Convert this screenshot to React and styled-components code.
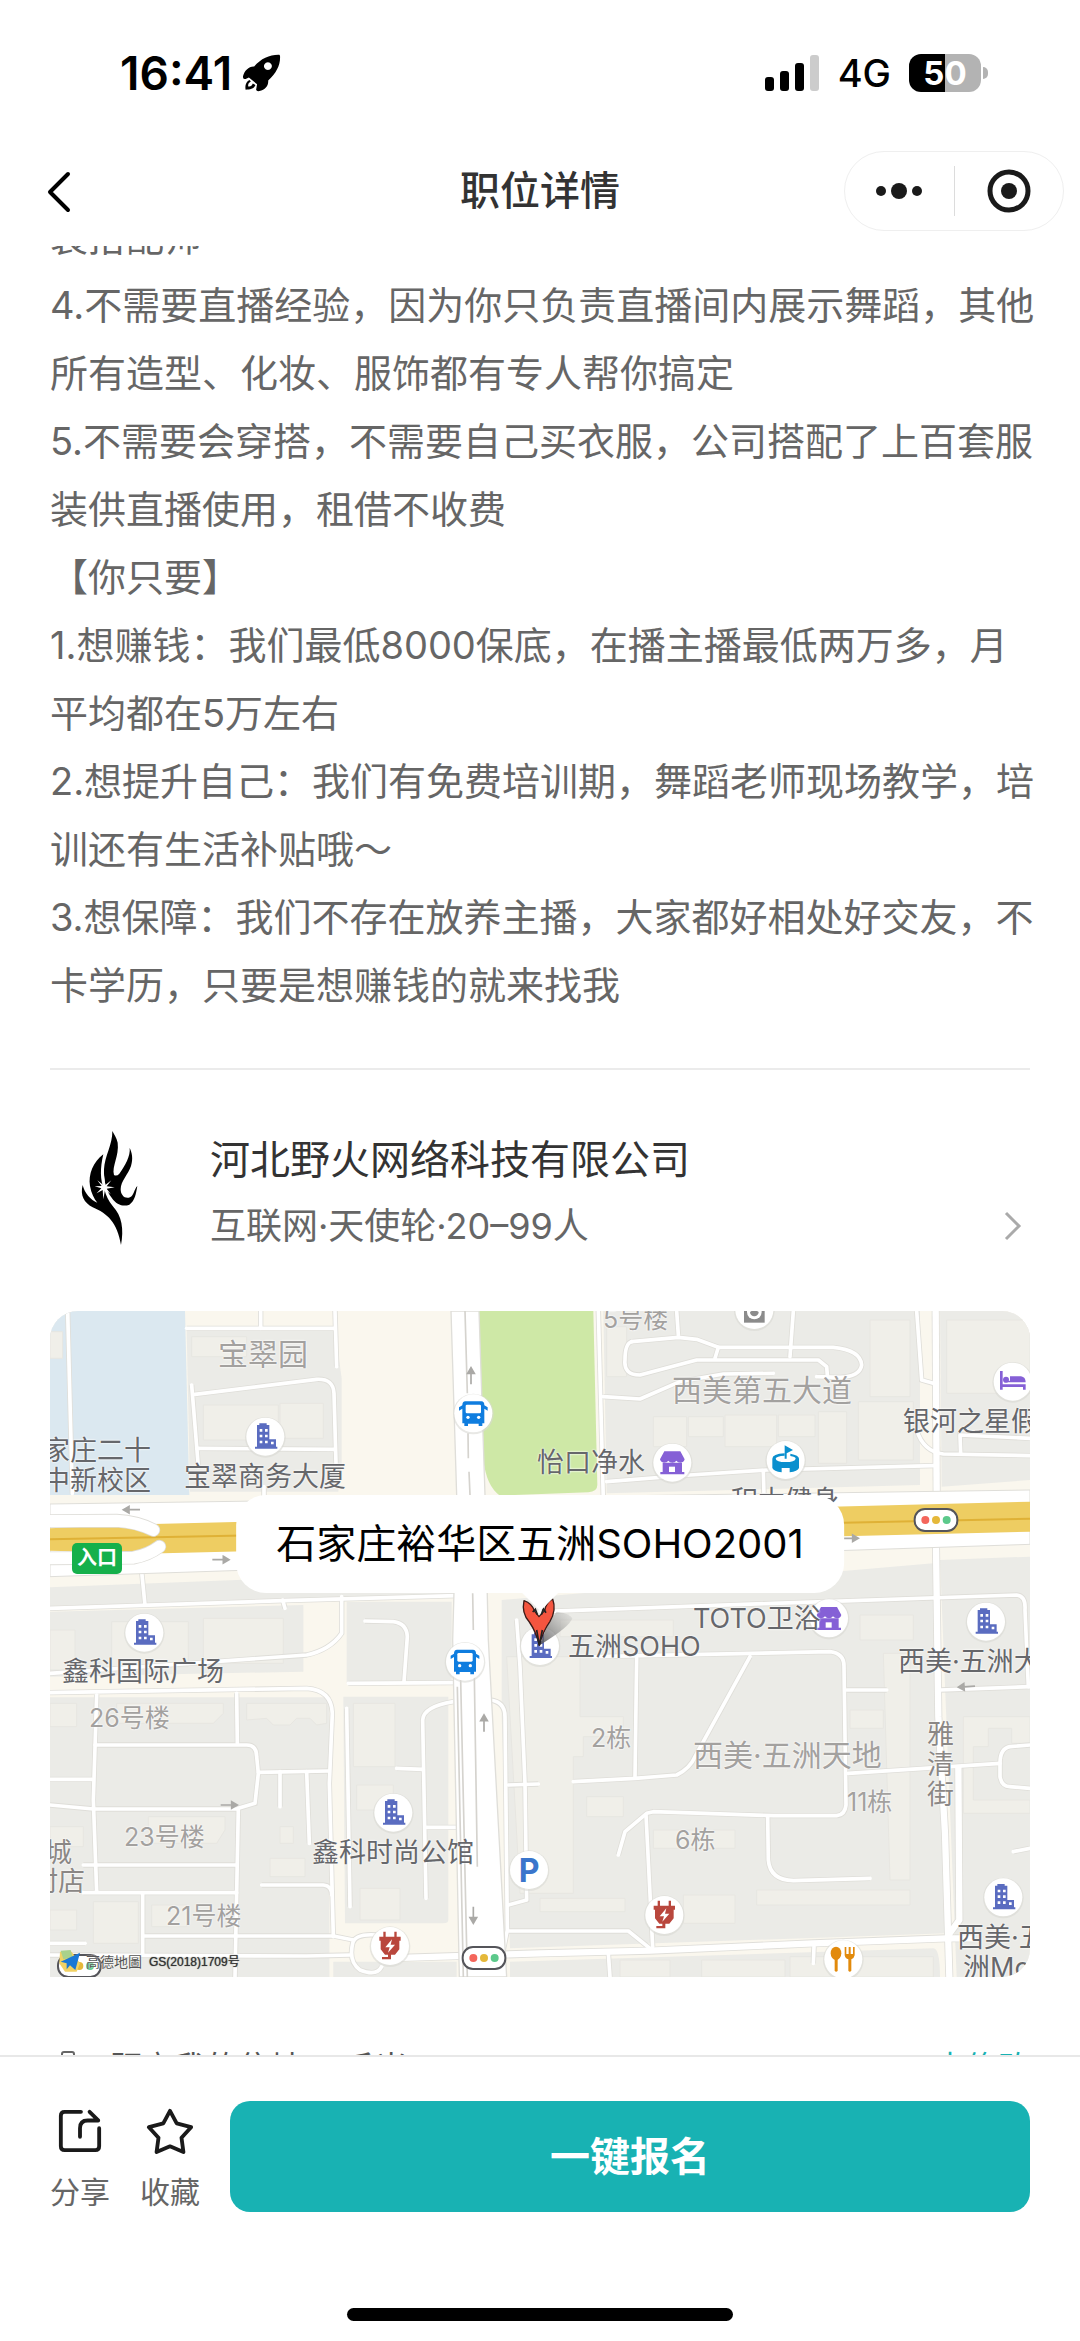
import React, { useLayoutEffect, useRef } from 'react'
import styled, { createGlobalStyle } from 'styled-components'

const GlobalStyle = createGlobalStyle`
  * {
    box-sizing: border-box;
  }
  body {
    margin: 0;
    background: #fff;
    font-family: Inter, 'Noto Sans CJK SC', sans-serif;
    color: #333;
  }
  button {
    padding: 0;
    border: none;
    background: none;
    font: inherit;
    color: inherit;
    cursor: pointer;
  }
  svg {
    display: block;
  }
`

const Page = styled.div`
  display: flex;
  flex-direction: column;
  height: 100vh;
`

const StatusBar = styled.div`
  display: flex;
  flex: none;
  justify-content: space-between;
  align-items: center;
  height: 136px;
  padding: 10px 92px 0 120px;
  color: #000;
`

const StatusGroup = styled.div`
  display: flex;
  align-items: center;
  gap: ${props => props.$gap}px;
`

const Time = styled.span`
  font-size: 46px;
  font-weight: 600;
`

const Network = styled.span`
  font-size: 38px;
  font-weight: 500;
`

const Battery = styled.div`
  display: flex;
  align-items: center;
  gap: 2px;

  .level {
    width: 72px;
    height: 38px;
    border-radius: 12px;
    background: linear-gradient(to right, #000 50%, #b3b3b3 50%);
    color: #fff;
    font-size: 33px;
    font-weight: 700;
    line-height: 38px;
    text-align: center;
  }
  .tip {
    width: 5px;
    height: 12px;
    border-radius: 0 6px 6px 0;
    background: #b3b3b3;
  }
`

const NavBar = styled.header`
  display: grid;
  flex: none;
  grid-template-columns: 1fr auto 1fr;
  align-items: center;
  height: 110px;
  padding: 0 16px;

  h1 {
    margin: 0;
    font-size: 40px;
    font-weight: 500;
    line-height: 56px;
  }
`

const BackButton = styled.button`
  justify-self: start;
  padding-left: 28px;
`

const Capsule = styled.div`
  display: flex;
  justify-self: end;
  align-items: center;
  width: 220px;
  height: 80px;
  border: 1px solid #efefef;
  border-radius: 40px;

  button {
    display: flex;
    flex: 1;
    justify-content: center;
  }
  button + button {
    height: 50px;
    align-items: center;
    border-left: 1px solid #dcdcdc;
  }
`

const Scroller = styled.main`
  flex: 1;
  min-height: 0;
  overflow-y: auto;
  padding: 0 50px 40px;
  scrollbar-width: none;
`

const Description = styled.p`
  margin: 0 -20px 49px 0;
  color: #666;
  font-size: 38px;
  line-height: 68px;
  white-space: pre-line;
`

const Company = styled.a`
  display: flex;
  align-items: flex-start;
  gap: 50px;
  padding: 58px 0 51px;
  border-top: 2px solid #ebebeb;
  color: inherit;
  text-decoration: none;

  h2 {
    margin: 0;
    font-size: 40px;
    font-weight: 400;
    line-height: 64px;
  }
`

const CompanyInfo = styled.div`
  flex: 1;
`

const CompanyMeta = styled.div`
  display: flex;
  justify-content: space-between;
  align-items: center;
  padding-right: 8px;
  color: #666;
  font-size: 36px;
  line-height: 68px;
`

const Map = styled.div`
  position: relative;
  height: 666px;
  overflow: hidden;
  border-radius: 28px 28px 28px 0;
  background: #ebebe7;
`

const labelTones = {
  poi: '#66676b',
  area: '#a3a19f',
  street: '#8b8785',
}

const Label = styled.span`
  position: absolute;
  left: ${props => props.$x}px;
  top: ${props => props.$y - 15}px;
  color: ${props => labelTones[props.$tone]};
  font-size: ${props => props.$size}px;
  line-height: 30px;
  text-shadow: 0 0 2px #fff, 0 0 2px #fff;
  white-space: pre;
`

const Entrance = styled.span`
  position: absolute;
  left: 22px;
  top: 232px;
  width: 50px;
  height: 31px;
  border-radius: 5px;
  background: #16b04b;
  color: #fff;
  font-size: 20px;
  font-weight: 700;
  line-height: 31px;
  text-align: center;
`

const Copyright = styled.span`
  position: absolute;
  left: 36px;
  bottom: 5px;
  display: flex;
  gap: 7px;
  color: #333;
  font-family: 'Liberation Sans', 'Noto Sans CJK SC', sans-serif;
  font-size: 12px;
  line-height: 20px;
  text-shadow: 0 0 1px #444;

  span {
    color: #555;
    font-size: 14px;
    text-shadow: 0 0 2px #fff;
  }
`

const Bubble = styled.div`
  position: absolute;
  top: 184px;
  left: 50%;
  padding: 0 40px;
  border-radius: 30px;
  background: #fff;
  color: #000;
  font-size: 40px;
  line-height: 98px;
  white-space: nowrap;
  transform: translateX(-50%);

  &::after {
    content: '';
    position: absolute;
    top: 100%;
    left: 50%;
    margin-left: -18px;
    border: 18px solid transparent;
    border-top-color: #fff;
    border-bottom: none;
  }
`

const Distance = styled.div`
  display: flex;
  align-items: center;
  margin-top: 67px;
  color: #555;
  font-size: 32px;
  line-height: 48px;

  svg {
    margin-right: 24px;
  }
  button {
    margin-left: auto;
    color: #18b2b3;
  }
`

const BottomBar = styled.footer`
  flex: none;
  padding-bottom: 20px;
  border-top: 2px solid #e8e8e8;
  background: #fff;
`

const Actions = styled.div`
  display: flex;
  align-items: center;
  gap: 30px;
  padding: 44px 50px 96px;
`

const IconButton = styled.button`
  display: flex;
  flex-direction: column;
  align-items: center;
  gap: 18px;
  height: 111px;
  padding-top: 7px;
  color: #666;
  font-size: 30px;
  line-height: 40px;
`

const ApplyButton = styled.button`
  flex: 1;
  height: 111px;
  padding-bottom: 6px;
  border-radius: 20px;
  background: #18b2b3;
  color: #fff;
  font-size: 40px;
  font-weight: 700;
`

const HomeIndicator = styled.div`
  width: 386px;
  height: 13px;
  margin: 0 auto;
  border-radius: 7px;
  background: #000;
`

const description = `装搭配师
4.不需要直播经验，因为你只负责直播间内展示舞蹈，其他
所有造型、化妆、服饰都有专人帮你搞定
5.不需要会穿搭，不需要自己买衣服，公司搭配了上百套服
装供直播使用，租借不收费
【你只要】
1.想赚钱：我们最低8000保底，在播主播最低两万多，月
平均都在5万左右
2.想提升自己：我们有免费培训期，舞蹈老师现场教学，培
训还有生活补贴哦～
3.想保障：我们不存在放养主播，大家都好相处好交友，不
卡学历，只要是想赚钱的就来找我`

const labels = [
  { x: 168, y: 43, size: 30, tone: 'area', text: '宝翠园' },
  { x: -7, y: 140, size: 27, tone: 'poi', text: '家庄二十\n中新校区' },
  { x: 134, y: 166, size: 27, tone: 'poi', text: '宝翠商务大厦' },
  { x: 487, y: 152, size: 27, tone: 'poi', text: '怡口净水' },
  { x: 553, y: 8, size: 25, tone: 'area', text: '5号楼' },
  { x: 622, y: 79, size: 30, tone: 'area', text: '西美第五大道' },
  { x: 853, y: 111, size: 27, tone: 'poi', text: '银河之星假' },
  { x: 681, y: 190, size: 27, tone: 'poi', text: '积木健身' },
  { x: 643, y: 308, size: 27, tone: 'poi', text: 'TOTO卫浴' },
  { x: 518, y: 336, size: 27, tone: 'poi', text: '五洲SOHO' },
  { x: 12, y: 361, size: 27, tone: 'poi', text: '鑫科国际广场' },
  { x: 39, y: 407, size: 25, tone: 'area', text: '26号楼' },
  { x: 74, y: 526, size: 25, tone: 'area', text: '23号楼' },
  { x: 116, y: 605, size: 25, tone: 'area', text: '21号楼' },
  { x: -5, y: 542, size: 27, tone: 'street', text: '城' },
  { x: -19, y: 571, size: 27, tone: 'street', text: '村店' },
  { x: 262, y: 542, size: 27, tone: 'poi', text: '鑫科时尚公馆' },
  { x: 541, y: 427, size: 25, tone: 'area', text: '2栋' },
  { x: 643, y: 444, size: 30, tone: 'area', text: '西美·五洲天地' },
  { x: 797, y: 491, size: 25, tone: 'area', text: '11栋' },
  { x: 625, y: 529, size: 25, tone: 'area', text: '6栋' },
  { x: 877, y: 424, size: 27, tone: 'street', text: '雅\n清\n街' },
  { x: 848, y: 351, size: 27, tone: 'poi', text: '西美·五洲大' },
  { x: 907, y: 627, size: 27, tone: 'poi', text: '西美·五' },
  { x: 913, y: 657, size: 27, tone: 'poi', text: '洲Mo' },
]

// map drawing units are a third of a pixel
const blocks = [
  'M440 90H885L905 235V490L895 575H450Z',
  'M1690 33H2640V555L1700 580Z',
  'M2700 33H2970V540L2705 560Z',
  'M30 862L1240 815V885L30 918Z',
  'M30 935L790 915V1115L30 1130Z',
  'M920 905H1235V1150H920Z',
  'M30 1192H850Q868 1195 868 1240V2031H30Z',
  'M910 1190H1225V1860Q1225 1870 1210 1870H915Z',
  'M880 1985H1250V2031H880Z',
  'M1385 900L2680 790L2720 1900L1410 1945L1385 1250Z',
  'M2700 780L2970 770V2031H2750Z',
  'M1410 1985L2680 1945Q2700 1945 2700 2031H1410Z',
]

const buildings = [
  'M30 95H68V175H30Z', 'M455 110H620V170H455Z', 'M490 315H715V420H490Z', 'M720 310H850V415H720Z',
  'M1700 80H1760V230H1700Z', 'M1840 350H1940V440H1840Z', 'M1945 350H2050V410H1945Z', 'M2055 345H2210V440H2055Z',
  'M2215 345H2325V410H2215Z', 'M2335 335H2420V490H2335Z', 'M2455 305H2620V480H2455Z', 'M2490 60H2610V290H2490Z',
  'M2720 60H2970V280H2720Z', 'M215 965H445V1100H215Z', 'M490 955H730V1090H490Z', 'M30 990H105V1110H30Z',
  'M30 1210H110V1280H30Z', 'M230 1210H550V1240L520 1270H230Z', 'M620 1210H860V1270L830 1275L810 1255H770L750 1275H700L680 1255L620 1260Z',
  'M940 1210H1065V1400H940Z', 'M950 1455H1060V1530H950Z', 'M960 1765H1080V1860H960Z', 'M325 1550H555V1590L530 1630H325Z',
  'M30 1580H130V1640H30Z', 'M160 1805H295V1930H160Z', 'M30 1830H110V1890H30Z', 'M690 1675H795V1730H690Z',
  'M335 1815H440V1880H335Z', 'M720 1580H760V1630H720Z', 'M1400 1070H1620V1250H1750V1310H1630V1370H1600V1780H1440Z',
  'M1640 1490H1750V1550H1640Z', 'M1840 1590H2085V1645H1840Z', 'M2430 1230H2530V1285H2430Z', 'M2530 1060H2610V1740H2550Z',
  'M2150 1770H2610V1815H2150Z', 'M1930 1785H2085V1870H1930Z', 'M1500 1795H1755V1835H1500Z', 'M2250 1970H2680V2031H2250Z',
  'M1985 1980H2235V2031H1985Z', 'M1740 1980H1890V2031H1740Z', 'M2770 1250H2970V1330H2915V1285H2845V1340H2800V1500H2970V1540H2770Z',
  'M2620 945H2460V1020H2620Z', 'M1560 960H1900V1010H1560Z',
]

const roads = [
  'M83 33L97 580', 'M440 85H885', 'M662 33V85', 'M885 33L890 200',
  'M455 255L475 500', 'M465 283L830 238Q880 235 882 280L888 490', 'M470 445L885 448', 'M672 560V600',
  'M1675 33L1690 600', 'M1910 33L1915 105',
  'M1775 125L1915 112L1970 118L2035 142H2380Q2462 150 2465 195Q2460 230 2400 232L2330 230',
  'M1775 125Q1755 130 1755 180Q1750 225 1800 225L1970 180H2335L2360 200L2362 225', 'M2035 142L2025 175', 'M2260 33L2250 170',
  'M1690 290L1800 297L1920 245L2050 222L2200 220', 'M1700 545L1950 525L2180 510L2680 497', 'M2170 515L2172 585',
  'M2630 33L2645 240L2680 250', 'M2630 390Q2650 455 2710 462L2970 467', 'M2970 415L2760 405L2762 460',
  'M305 815L315 915', 'M30 925L730 902L1250 887', 'M728 900L735 925',
  'M30 1120L800 1065Q870 1050 905 1000V890', 'M30 1178L800 1165Q875 1170 877 1240L868 1450L880 1910',
  'M170 1185L160 1500L170 1775', 'M165 1335H620Q650 1335 650 1370L655 1420L645 1510L595 1525L585 2031', 'M590 1180L592 1330',
  'M30 1438H155', 'M30 1515L160 1527H595', 'M655 1417L865 1413', 'M720 1415V1520', 'M800 1415L808 1630',
  'M130 1695H590', 'M130 1778H590', 'M308 1780V1960', 'M665 1755H850Q875 1757 875 1785', 'M310 1908H880L940 1920',
  'M30 1965L800 1968L930 1965', 'M1010 1905Q945 1900 938 1930Q925 1985 960 2010Q1010 2030 1025 2000', 'M30 1930H135',
  'M920 1225L930 1820', 'M1240 1205Q1150 1220 1148 1260L1158 1795', 'M1160 1582H1280', 'M1070 1405L1150 1408',
  'M925 1150L1240 1148', 'M975 963L1060 965Q1100 970 1102 1010L1092 1145',
  'M1350 1200Q1395 1205 1395 1250L1402 1890L1380 2000', 'M1430 960L1440 1100L1455 1450L1460 1800L1405 1815', 'M1405 1455L1495 1452', 'M1405 1893H1765L1830 1945',
  'M1500 935L2200 910L2930 885Q2958 888 2955 930L2965 1160', 'M1600 1445L1785 1435L1910 1425Q1950 1405 1965 1370L2130 1070', 'M1790 1075L1785 1430',
  'M1660 1070L2370 1055Q2413 1060 2412 1100L2418 1515Q2415 1545 2390 1547L2200 1547L1840 1535L1820 1540L1755 1595L1735 1665',
  'M1818 1545L1838 1940', 'M2183 1550L2185 1680Q2190 1740 2260 1742L2490 1735', 'M2420 1170H2540', 'M2425 1420L2880 1390',
  'M2970 1335L2910 1340Q2880 1345 2880 1390V1430Q2885 1460 2910 1460L2970 1465', 'M2700 1170L2970 1160', 'M1705 1960L1710 2031', 'M2322 1940L2320 1990', 'M2920 1655L2970 1645',
]

const wideRoads = [
  'M2687 33L2690 580', 'M2688 740L2695 1250L2715 1600L2728 2031', 'M2755 1395L2758 1860L2722 1910',
  'M1040 1975L1500 1960L1830 1952L2320 1930L2720 1915H2800',
]

const arrows = [
  [1293, 228, -90], [275, 629, 180], [542, 779, 0], [567, 1515, 0], [1332, 1270, -90], [1300, 1845, 90], [2780, 1160, 176], [2430, 715, 0],
]

const BuildingIcon = () => (
  <g fill="#5a6cc0">
    <path d="M-25-35H-18V-40H4V-35H12V8H32V30H36V36H-31V30H-25Z" />
    <path d="M-17-23h8v8h-8ZM-1-23h8v8h-8ZM-17-6h8v8h-8ZM-1-6h8v8h-8ZM-17 12h8v8h-8ZM-1 12h8v8h-8ZM17 15h8v8h-8Z" fill="#fff" />
  </g>
)

const BusIcon = () => (
  <g fill="#0f7ddf">
    <path d="M-24-36H24Q33-35 33-25V-24L43-18V-8L33-14V30H27V38H16V31H-16V38H-27V30H-33V-14L-43-8V-18L-33-24V-25Q-33-35-24-36Z" />
    <rect x="-23" y="-26" width="46" height="26" rx="4" fill="#fff" />
    <circle cx="-16" cy="12" r="5" fill="#fff" />
    <circle cx="16" cy="12" r="5" fill="#fff" />
  </g>
)

const StoreIcon = () => (
  <g fill="#8560d6">
    <path d="M-24-34H24L37-10Q34 0 25 0Q16 0 12-6Q8 0 0 0Q-8 0-12-6Q-16 0-25 0Q-34 0-37-10Z" />
    <path d="M-29 0H29V28H36V35H-36V28H-29Z" />
    <rect x="-10" y="12" width="18" height="16" fill="#fff" />
  </g>
)

const StadiumIcon = () => (
  <g fill="#0a8fce">
    <path d="M-3-44L22-30L3-20V-4H-3Z" />
    <path d="M-3-20Q-40-18-40-4V24Q-36 34-12 37V24H12V37Q36 34 40 24V-4Q40-14 14-19V-12Q30-10 30-4Q28 6 0 6Q-28 6-30-4Q-28-12-3-13Z" />
  </g>
)

const BedIcon = () => (
  <g fill="#8560d6">
    <path d="M-38-32H-30V8H39V24H31V16H-30V24H-38Z" />
    <circle cx="-20" cy="-6" r="9" />
    <path d="M-8-16H25Q39-14 39 2H-26V-1L-8-3Z" />
  </g>
)

const WasherIcon = () => (
  <g>
    <rect x="-31" y="-40" width="62" height="78" fill="#8b8b8b" />
    <circle cy="6" r="22" fill="#fff" />
    <path d="M-13 6Q0-4 13 6A13 13 0 0 1-13 6Z" fill="#8b8b8b" />
  </g>
)

const PlugIcon = () => (
  <g fill="#b9473d">
    <path d="M-20-43H-13V-28H13V-43H20V-28H32V-16H28V10L15 26H3V40H-24V33H-6V26H-15L-28 10V-16H-32V-28H-20Z" />
    <path d="M6-20L-14 4H-1L-6 20L15-4H2Z" fill="#fff" />
  </g>
)

const FoodIcon = () => (
  <g fill="#e28a0c">
    <ellipse cx="-22" cy="-18" rx="16" ry="20" />
    <rect x="-26" y="-4" width="9" height="41" rx="4" />
    <path d="M4-37H9V-16H16V-37H22V-16H29V-37H34V-12Q32-2 24 0V34Q19 40 15 34V0Q6-2 4-12Z" />
  </g>
)

const ParkingIcon = () => (
  <text y="35" fill="#3a76cc" fontFamily="Inter, sans-serif" fontSize="96" fontWeight="700" textAnchor="middle">P</text>
)

const pois = [
  [676, 410, BuildingIcon], [313, 998, BuildingIcon], [2838, 965, BuildingIcon], [2890, 1792, BuildingIcon],
  [1060, 1538, BuildingIcon], [1500, 1038, BuildingIcon], [1300, 340, BusIcon], [1275, 1085, BusIcon],
  [1897, 488, StoreIcon], [2367, 955, StoreIcon], [2237, 480, StadiumIcon], [2143, 30, WasherIcon],
  [2918, 245, BedIcon], [1467, 1710, ParkingIcon], [1050, 1938, PlugIcon], [1873, 1845, PlugIcon], [2410, 1978, FoodIcon],
]

const TrafficLight = ({ x, y }) => (
  <g transform={`translate(${x} ${y})`}>
    <rect x="-64" y="-33" width="128" height="66" rx="31" fill="#fff" stroke="#55555a" strokeWidth="6" />
    <circle cx="-32" r="12" fill="#f4665c" />
    <circle r="12" fill="#e5b83a" />
    <circle cx="32" r="12" fill="#5cc98b" />
  </g>
)

const MapDrawing = () => (
  <svg width="980" height="666" viewBox="30 33 2940 1998">
    <rect x="30" y="33" width="2940" height="1998" fill="#faf7ee" />
    <path d="M30 33H435L448 585H30Z" fill="#dbe8f0" />
    {blocks.map(d => <path key={d} d={d} fill="#ebebe7" />)}
    {buildings.map(d => <path key={d} d={d} fill="#f0efe9" stroke="#e7e6e1" strokeWidth="3" />)}
    <path d="M1315 33H1660L1672 555Q1672 575 1645 577L1380 587Q1340 560 1330 480Z" fill="#cee8a6" />
    <g fill="none" stroke="#dfded9" strokeWidth="16">
      {roads.map(d => <path key={d} d={d} />)}
    </g>
    <g fill="none" stroke="#dfded9" strokeWidth="24">
      {wideRoads.map(d => <path key={d} d={d} />)}
    </g>
    <g fill="none" stroke="#fff" strokeWidth="11" strokeLinejoin="round" strokeLinecap="round">
      {roads.map(d => <path key={d} d={d} />)}
    </g>
    <g fill="none" stroke="#fff" strokeWidth="19" strokeLinejoin="round">
      {wideRoads.map(d => <path key={d} d={d} />)}
    </g>

    <path d="M30 612L2970 570V733L30 830Z" fill="#fff" stroke="#dfded9" strokeWidth="3" />
    <path d="M30 685L340 672L2970 605V695L370 760L30 752Z" fill="#eecd62" />
    <path d="M30 718L345 712L2970 656" fill="none" stroke="#dfb136" strokeWidth="6" />
    <g fill="none" strokeLinecap="round">
      <path d="M20 663L230 662Q290 665 340 690M20 775L280 773Q325 765 358 740" stroke="#dfded9" strokeWidth="41" />
      <path d="M20 663L230 662Q290 665 340 690M20 775L280 773Q325 765 358 740" stroke="#fff" strokeWidth="36" />
    </g>
    <path d="M1233 33H1317L1335 585L1345 1020L1400 2031H1258L1238 1020L1250 585Z" fill="#fff" stroke="#dfded9" strokeWidth="4" />
    <path d="M1275 33L1282 280M1284 400L1285 475M1287 515L1290 585M1298 880L1300 990M1252 1160L1270 2031M1262 1140L1282 2031M1303 1130L1312 1700" fill="none" stroke="#d5d3ce" strokeWidth="5" />

    {arrows.map(([x, y, turn]) => (
      <path key={x} d="M-25 0H20M8-10L25 0L8 10Z" transform={`translate(${x} ${y}) rotate(${turn})`} fill="#aaa9a6" stroke="#aaa9a6" strokeWidth="5" />
    ))}

    {pois.map(([x, y, Icon]) => (
      <g key={`${x}-${y}`} transform={`translate(${x} ${y})`}>
        <circle r="61" cy="2" fill="#d9d8d4" opacity="0.6" />
        <circle r="57" fill="#fff" />
        <Icon />
      </g>
    ))}
    <TrafficLight x={2688} y={660} />
    <TrafficLight x={1332} y={1974} />
    <TrafficLight x={118} y={1998} />

    <path d="M60 1955H95L120 1990L110 2015H75L58 1990Z" fill="#f2d264" />
    <path d="M62 1952L92 1950L98 1972L70 1978Z" fill="#a9d18b" />
    <path d="M62 1985L120 1958L106 2010L90 1996L80 2008V1990Z" fill="#1a78d6" />

    <defs>
      <linearGradient id="pin-shadow" x1="0" y1="1" x2="1" y2="0">
        <stop offset="0" stopColor="#555" stopOpacity="0.9" />
        <stop offset="1" stopColor="#999" stopOpacity="0.1" />
      </linearGradient>
    </defs>
    <path d="M1500 1035Q1520 970 1550 935Q1590 940 1597 955Q1590 980 1500 1035Z" fill="url(#pin-shadow)" />
    <path d="M1452 902Q1444 940 1468 966Q1488 995 1498 1036Q1508 995 1530 964Q1550 930 1538 897Q1518 908 1514 932L1497 950L1484 934Q1476 910 1452 902Z" fill="#f4553f" stroke="#3b1a17" strokeWidth="4" strokeLinejoin="round" />
    <path d="M1478 936L1486 928L1492 944M1504 944L1510 926L1518 938M1490 990L1498 1036L1507 990" fill="none" stroke="#222" strokeWidth="5" />
  </svg>
)

const JobDetail = () => {
  const scroller = useRef(null)

  // open part of the way down the description
  useLayoutEffect(() => {
    scroller.current.scrollTop = 43
  }, [])

  return (
    <Scroller ref={scroller}>
      <Description>{description}</Description>

      <Company href="#company">
        <svg width="110" height="120" viewBox="-30 66 330 360">
          <path d="M130 145C100 168 84 205 90 240C94 262 102 278 112 290C92 282 74 262 68 237C60 268 72 290 98 304C142 322 172 350 183 417C192 370 186 330 158 300C146 286 138 270 133 250C120 225 120 185 130 145Z" />
          <path d="M157 75C158 115 134 150 132 190C131 225 138 255 155 275C170 297 190 303 208 296C225 285 228 262 232 240C222 250 222 268 210 274C195 280 182 268 182 250C182 225 205 205 213 180C220 158 216 140 209 126C212 150 195 180 178 203Q170 212 162 207C155 180 178 150 173 110C170 95 162 85 157 75Z" />
          <path d="M132 208L136 237L154 223L140 241L164 244L140 248L152 264L135 252L130 280L128 252L110 262L124 247L104 241L125 240L112 223L129 236Z" fill="#fff" />
        </svg>
        <CompanyInfo>
          <h2>河北野火网络科技有限公司</h2>
          <CompanyMeta>
            互联网·天使轮·20–99人
            <svg width="18" height="30" viewBox="0 0 18 30" fill="none" stroke="#aaa" strokeWidth="3">
              <path d="M2 2L15 15L2 28" />
            </svg>
          </CompanyMeta>
        </CompanyInfo>
      </Company>

      <Map>
        <MapDrawing />
        {labels.map(label => (
          <Label key={label.text} $x={label.x} $y={label.y} $size={label.size} $tone={label.tone}>{label.text}</Label>
        ))}
        <Entrance>入口</Entrance>
        <Copyright><span>高德地圖</span>GS(2018)1709号</Copyright>
        <Bubble>石家庄裕华区五洲SOHO2001</Bubble>
      </Map>

      <Distance>
        <svg width="36" height="36" viewBox="0 0 36 36" fill="none" stroke="#666" strokeWidth="2">
          <path d="M12 6V4Q12 2 14 2H22Q24 2 24 4V6M6 34V9Q6 6 9 6H27Q30 6 30 9V34Z" />
        </svg>
        距离我的住址1.5千米
        <button type="button">去修改</button>
      </Distance>
    </Scroller>
  )
}

const App = () => {
  return (
    <Page>
      <GlobalStyle />
      <StatusBar>
        <StatusGroup $gap={10}>
          <Time>16:41</Time>
          <svg width="39" height="38" viewBox="430 73 117 116">
            <path fillRule="evenodd" d="M543 75C515 74 487 86 466 111C450 110 436 124 432 141Q431 152 440 149L450 145L475 165L472 182Q474 188 482 186C500 182 510 170 509 154C535 130 547 105 545 78ZM508 98a12 12 0 1 0 .1 0Z" />
            <path d="M452 152C440 158 438 170 440 182C452 182 466 180 470 168L462 163Q458 174 448 172Q446 162 456 157Z" />
          </svg>
        </StatusGroup>
        <StatusGroup $gap={18}>
          <svg width="55" height="36" viewBox="0 0 55 36">
            <rect y="22" width="9" height="14" rx="3" />
            <rect x="15" y="16" width="9" height="20" rx="3" />
            <rect x="30" y="8" width="9" height="28" rx="3" />
            <rect x="45" width="9" height="36" rx="3" fill="#ccc" />
          </svg>
          <Network>4G</Network>
          <Battery>
            <div className="level">50</div>
            <div className="tip" />
          </Battery>
        </StatusGroup>
      </StatusBar>

      <NavBar>
        <BackButton type="button" aria-label="返回">
          <svg width="30" height="44" viewBox="0 0 30 44" fill="none" stroke="#000" strokeWidth="4" strokeLinecap="round" strokeLinejoin="round">
            <path d="M24 5L6 23L24 41" />
          </svg>
        </BackButton>
        <h1>职位详情</h1>
        <Capsule>
          <button type="button" aria-label="更多">
            <svg width="48" height="18" viewBox="0 0 48 18" fill="#1a1a1a">
              <circle cx="6" cy="9" r="5" />
              <circle cx="24" cy="9" r="8" />
              <circle cx="42" cy="9" r="5" />
            </svg>
          </button>
          <button type="button" aria-label="关闭">
            <svg width="44" height="44" viewBox="0 0 44 44" fill="#1a1a1a">
              <circle cx="22" cy="22" r="19" fill="none" stroke="#1a1a1a" strokeWidth="5" />
              <circle cx="22" cy="22" r="8" />
            </svg>
          </button>
        </Capsule>
      </NavBar>

      <JobDetail />

      <BottomBar>
        <Actions>
          <IconButton type="button">
            <svg width="48" height="48" viewBox="0 0 48 48" fill="none" stroke="#1a1a1a" strokeWidth="4" strokeLinecap="round" strokeLinejoin="round">
              <path d="M25 4H8Q4 4 4 8V40Q4 44 8 44H40Q44 44 44 40V21" />
              <path d="M24 30V21Q24 13 32 13H43L34 4" />
            </svg>
            分享
          </IconButton>
          <IconButton type="button">
            <svg width="48" height="48" viewBox="0 0 48 48" fill="none" stroke="#1a1a1a" strokeWidth="4" strokeLinejoin="round">
              <path d="M24 3L31 16L46 20L36 31L38 46L24 40L10 46L12 31L2 20L17 16Z" />
            </svg>
            收藏
          </IconButton>
          <ApplyButton type="button">一键报名</ApplyButton>
        </Actions>
        <HomeIndicator />
      </BottomBar>
    </Page>
  )
}

export default App
